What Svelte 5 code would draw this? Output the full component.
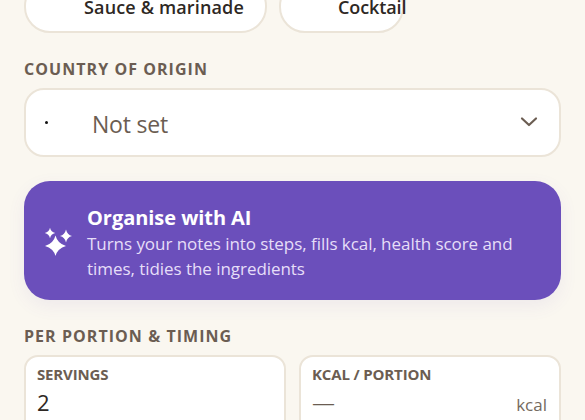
<script>
  const pills = [
    { label: 'Sauce & marinade', width: 'wide' },
    { label: 'Cocktail', width: 'narrow' }
  ];
</script>

<main class="page">
  <div class="pills">
    {#each pills as p}
      <div class="pill {p.width}"><span class="pill-text">{p.label}</span></div>
    {/each}
  </div>

  <h2 class="section first">COUNTRY OF ORIGIN</h2>
  <div class="select">
    <span class="dot"></span>
    <span class="placeholder">Not set</span>
    <svg class="chev" width="20" height="20" viewBox="0 0 20 20" fill="none" stroke="#6b5d52" stroke-width="2.2" stroke-linecap="round" stroke-linejoin="round"><path d="M3 6.500 10 13 17 6.500"/></svg>
  </div>

  <div class="ai">
    <svg class="spark" width="30" height="30" viewBox="0 0 30 30" fill="#fff">
      <path d="M13.500 9.500 Q15.500 17.500 24 20 Q15.500 22.500 13.500 30 Q11.500 22.500 3 20 Q11.500 17.500 13.500 9.500Z"/>
      <path d="M8 1.800 Q9 6 13.200 7 Q9 8 8 12.200 Q7 8 2.800 7 Q7 6 8 1.800Z"/>
      <path d="M24 3.500 Q25.200 8.800 30 10 Q25.200 11.200 24 16.500 Q22.800 11.200 18 10 Q22.800 8.800 24 3.500Z"/>
    </svg>
    <div class="ai-text">
      <div class="ai-title">Organise with AI</div>
      <div class="ai-sub">Turns your notes into steps, fills kcal, health score and times, tidies the ingredients</div>
    </div>
  </div>

  <h2 class="section second">PER PORTION &amp; TIMING</h2>
  <div class="grid">
    <div class="card">
      <div class="card-label">SERVINGS</div>
      <div class="card-value">2</div>
    </div>
    <div class="card">
      <div class="card-label">KCAL / PORTION</div>
      <div class="card-row"><span class="dash">—</span><span class="unit">kcal</span></div>
    </div>
  </div>
</main>

<style>
  :global(body) {
    margin: 0;
    background: #faf7f0;
    overflow: hidden;
  }
  .page {
    height: 420px;
    overflow: hidden;
    box-sizing: border-box;
    padding: 0 24px;
    font-family: "Open Sans", "Noto Sans", sans-serif;
    color: #2e2824;
  }
  .pills {
    display: flex;
    gap: 12px;
    margin-top: -20px;
  }
  .pill {
    box-sizing: border-box;
    height: 53px;
    background: #fff;
    border: 2px solid #ebe4d8;
    border-radius: 26px;
    display: flex;
    align-items: center;
    font-size: 18px;
    font-weight: 600;
    letter-spacing: 0.15px;
    color: #2e2824;
  }
  .wide { width: 243px; padding-left: 58px; }
  .narrow { width: 125px; padding-left: 57px; }
  .narrow .pill-text { letter-spacing: -0.1px; }
  .section {
    margin: 0;
    font-size: 16px;
    line-height: 20px;
    font-weight: 700;
    letter-spacing: 1.05px;
    color: #6b5d52;
  }
  .first { margin-top: 26px; }
  .second { margin-top: 26px; }
  .select {
    box-sizing: border-box;
    height: 69px;
    margin-top: 9px;
    background: #fff;
    border: 2px solid #ebe4d8;
    border-radius: 20px;
    display: flex;
    align-items: center;
    padding: 0 21px 0 19px;
  }
  .dot {
    width: 3px;
    height: 3px;
    border-radius: 50%;
    background: #111;
  }
  .placeholder {
    margin-left: 44px;
    margin-top: 3px;
    font-size: 23px;
    font-weight: 400;
    letter-spacing: -0.2px;
    color: #6b5d52;
  }
  .chev { margin-left: auto; margin-top: -2px; margin-right: -1px; }
  .ai {
    box-sizing: border-box;
    height: 119px;
    margin-top: 24px;
    background: #6b4fbb;
    border-radius: 26px;
    box-shadow: 0 6px 18px rgba(107, 79, 187, 0.08);
    display: flex;
    align-items: center;
    padding: 0 20px 0 18px;
    gap: 15px;
    color: #fff;
  }
  .spark { flex: none; margin-top: 1px; overflow: visible; }
  .ai-text { padding-top: 4px; }
  .ai-title {
    font-size: 20px;
    line-height: 26px;
    font-weight: 700;
    letter-spacing: -0.05px;
  }
  .ai-sub {
    font-size: 17px;
    line-height: 25px;
    letter-spacing: -0.05px;
    color: #e6def8;
  }
  .grid {
    display: grid;
    grid-template-columns: 1fr 1fr;
    gap: 13px;
    margin-top: 9px;
  }
  .card {
    box-sizing: border-box;
    height: 90px;
    background: #fff;
    border: 2px solid #ebe4d8;
    border-radius: 14px;
    padding: 7px 12px 6px 11px;
  }
  .card-label {
    font-size: 15px;
    line-height: 20px;
    font-weight: 700;
    letter-spacing: -0.15px;
    color: #6b5d52;
  }
  .card-value {
    font-size: 22px;
    line-height: 30px;
    margin-top: 3px;
    color: #2e2824;
  }
  .card-row {
    display: flex;
    justify-content: space-between;
    align-items: baseline;
    margin-top: 3px;
    line-height: 30px;
  }
  .dash { font-size: 23px; font-weight: 300; color: #6b5d52; }
  .unit { font-size: 17px; color: #756a60; }
</style>
